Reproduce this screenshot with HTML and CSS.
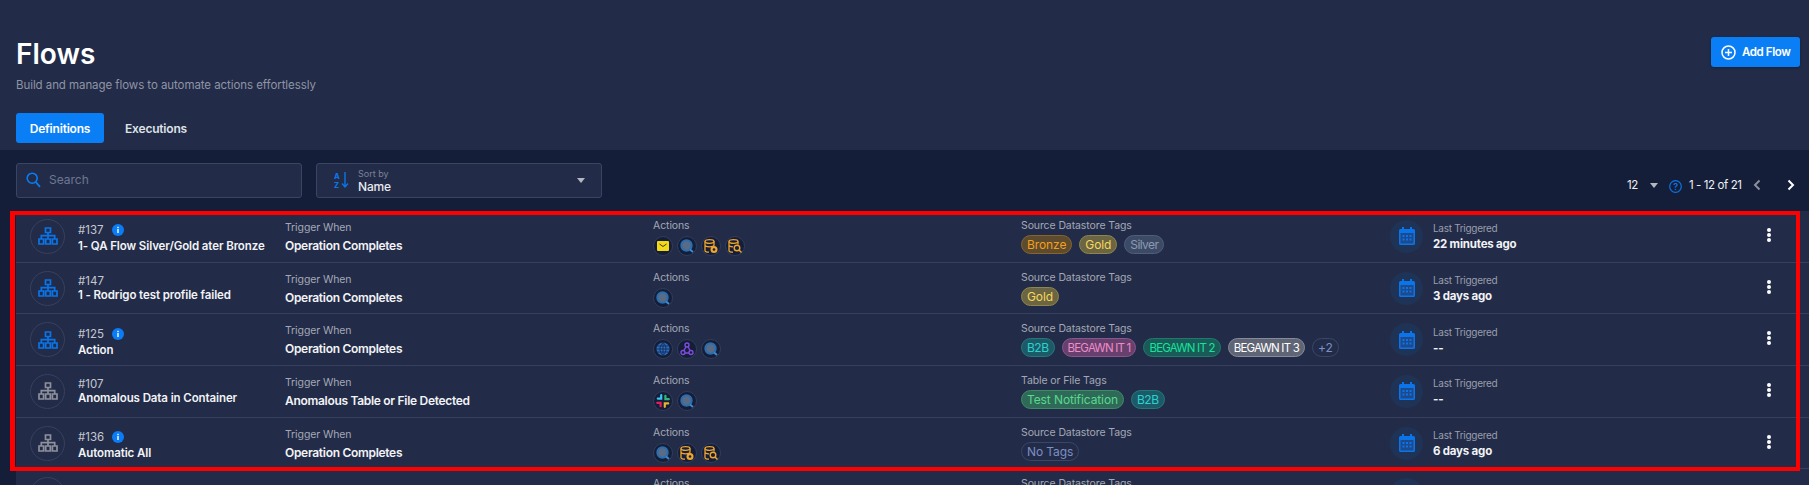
FILE: index.html
```html
<!DOCTYPE html>
<html lang="en">
<head>
    <meta charset="UTF-8">
    <title>Flows</title>
    <link rel="stylesheet" href="styles.css">
</head>
<body>
    <svg class="icon-defs" width="0" height="0">
        <symbol id="flow" viewBox="0 0 20 18">
            <path d="M7.5 1h5v4.5h-5zM1 12h4.6v5H1zM7.7 12h4.6v5H7.7zM14.4 12h4.6v5h-4.6zM10 5.5V12M3.3 12V8.7h13.4V12" fill="none" stroke="currentColor" stroke-width="1.7"/>
        </symbol>
        <symbol id="info" viewBox="0 0 12 12">
            <circle cx="6" cy="6" r="6" fill="#0a7cf5"/>
            <rect x="5.3" y="5" width="1.4" height="4" fill="#fff"/>
            <rect x="5.3" y="2.8" width="1.4" height="1.4" fill="#fff"/>
        </symbol>
        <symbol id="calendar" viewBox="0 0 16 18">
            <path d="M3 0h2v2h6V0h2v2h1.5A1.5 1.5 0 0 1 16 3.500V16.500A1.500 1.500 0 0 1 14.500 18h-13A1.500 1.500 0 0 1 0 16.500V3.500A1.500 1.500 0 0 1 1.500 2H3z" fill="#0a74e8"/>
            <rect x="1.500" y="6" width="13" height="10.500" fill="#1c4a8c"/>
            <path d="M3.500 8h2v2h-2zM7 8h2v2H7zM10.500 8h2v2h-2zM3.500 11.500h2v2h-2zM7 11.500h2v2H7zM10.500 11.500h2v2h-2z" fill="#0a74e8"/>
        </symbol>
        <symbol id="mail" viewBox="0 0 12 10">
            <rect width="12" height="10" rx="1" fill="#f2d816"/>
            <path d="M2.500 3 6 5.500 9.500 3" fill="none" stroke="#3b3a20" stroke-width="1"/>
        </symbol>
        <symbol id="scan" viewBox="0 0 14 14">
            <circle cx="6.500" cy="6.500" r="5.200" fill="#5a6b86" stroke="#2a6db0" stroke-width="2"/>
            <path d="M10 10.500 13 13" stroke="#3e8ad0" stroke-width="2" fill="none"/>
        </symbol>
        <symbol id="db-check" viewBox="0 0 14 14">
            <ellipse cx="5.500" cy="2.500" rx="4.500" ry="1.800" fill="none" stroke="#f0a52e" stroke-width="1.300"/>
            <path d="M1 2.500v9c0 1 2 1.700 4 1.700M10 2.500v4M1 6c0 1 2 1.800 4.500 1.800S10 7 10 6" fill="none" stroke="#f0a52e" stroke-width="1.300"/>
            <circle cx="10" cy="10.500" r="3.500" fill="#f0a52e"/>
            <circle cx="10" cy="10.500" r="1.300" fill="#151e38"/>
        </symbol>
        <symbol id="db-search" viewBox="0 0 14 14">
            <ellipse cx="5.500" cy="2.500" rx="4.500" ry="1.800" fill="none" stroke="#f0a52e" stroke-width="1.300"/>
            <path d="M1 2.500v9c0 1 2 1.700 4 1.700M10 2.500v3M1 6c0 1 2 1.800 4 1.800" fill="none" stroke="#f0a52e" stroke-width="1.300"/>
            <circle cx="9" cy="9" r="2.800" fill="none" stroke="#f0a52e" stroke-width="1.400"/>
            <path d="M11 11l2.500 2.500" stroke="#f0a52e" stroke-width="1.500"/>
        </symbol>
        <symbol id="globe" viewBox="0 0 14 14">
            <circle cx="7" cy="7" r="6.500" fill="#2a6ec0"/>
            <path d="M.5 7h13M1.500 4h11M1.500 10h11M7 .5v13M7 .5C3 4 3 10 7 13.500M7 .5c4 3.500 4 9.500 0 13" fill="none" stroke="#14254a" stroke-width=".8"/>
        </symbol>
        <symbol id="webhook" viewBox="0 0 14 14">
            <circle cx="7" cy="3" r="2" fill="none" stroke="#7f4be0" stroke-width="1.400"/>
            <circle cx="3" cy="10.500" r="2" fill="none" stroke="#7f4be0" stroke-width="1.400"/>
            <circle cx="11" cy="10.500" r="2" fill="none" stroke="#7f4be0" stroke-width="1.400"/>
            <path d="M6 5 3.500 9M8 5l2.500 4M5 11h4" fill="none" stroke="#7f4be0" stroke-width="1.400"/>
        </symbol>
        <symbol id="slack" viewBox="0 0 14 14">
            <path d="M5.200 1.200v3.400H1.800" fill="none" stroke="#36c5f0" stroke-width="2.200" stroke-linecap="round"/>
            <path d="M1.200 8.800h3.400v3.400" fill="none" stroke="#e01e5a" stroke-width="2.200" stroke-linecap="round"/>
            <path d="M8.800 12.800V9.400h3.400" fill="none" stroke="#ecb22e" stroke-width="2.200" stroke-linecap="round"/>
            <path d="M12.800 5.200H9.400V1.800" fill="none" stroke="#2eb67d" stroke-width="2.200" stroke-linecap="round"/>
        </symbol>
    </svg>

    <div class="page">
        <header class="page-header">
            <div class="title-row">
                <div>
                    <h1>Flows</h1>
                    <p class="subtitle">Build and manage flows to automate actions effortlessly</p>
                </div>
                <button class="add-button">
                    <svg width="15" height="15" viewBox="0 0 15 15"><circle cx="7.500" cy="7.500" r="6.500" fill="none" stroke="#fff" stroke-width="1.500"/><path d="M7.500 4v7M4 7.500h7" stroke="#fff" stroke-width="1.500"/></svg>
                    Add Flow
                </button>
            </div>
            <div class="tabs">
                <span class="tab tab-active">Definitions</span>
                <span class="tab">Executions</span>
            </div>
        </header>

        <div class="filter-bar">
            <div class="search-box">
                <svg width="15" height="16" viewBox="0 0 15 16"><circle cx="6.200" cy="6.200" r="5" fill="none" stroke="#0a7cf5" stroke-width="1.600"/><path d="M9.800 10 14 14.800" stroke="#0a7cf5" stroke-width="1.800"/></svg>
                <input type="text" placeholder="Search">
            </div>
            <div class="sort-box">
                <svg width="15" height="17" viewBox="0 0 15 17"><text x="0" y="7" class="sort-letter">A</text><text x="0" y="16" class="sort-letter">Z</text><path d="M11 0v14M8 11.500l3 3.500 3-3.500" fill="none" stroke="#0a74e8" stroke-width="1.400"/></svg>
                <div class="sort-text">
                    <span class="sort-label">Sort by</span>
                    <span class="sort-value">Name</span>
                </div>
                <span class="caret"></span>
            </div>
            <div class="pagination">
                <span class="page-size">12</span>
                <span class="caret caret-small"></span>
                <svg class="help-icon" width="13" height="13" viewBox="0 0 13 13"><circle cx="6.500" cy="6.500" r="5.800" fill="none" stroke="#0a74e8" stroke-width="1.200"/><text x="6.500" y="9.700" class="help-mark">?</text></svg>
                <span class="page-range">1 - 12 of 21</span>
                <svg class="chevron" width="8" height="12" viewBox="0 0 8 12"><path d="M6.500 1.500 2 6l4.500 4.500" fill="none" stroke="#8a8f9e" stroke-width="2"/></svg>
                <svg class="chevron chevron-next" width="8" height="12" viewBox="0 0 8 12"><path d="M1.500 1.500 6 6l-4.500 4.500" fill="none" stroke="#fff" stroke-width="2"/></svg>
            </div>
        </div>

        <div class="flow-list">
            <div class="flow-row">
                <div class="flow-name">
                    <span class="flow-icon"><svg width="20" height="18"><use href="#flow"/></svg></span>
                    <div>
                        <div class="flow-id flow-id-info">#137 <svg width="12" height="12"><use href="#info"/></svg></div>
                        <div class="flow-title">1- QA Flow Silver/Gold ater Bronze</div>
                    </div>
                </div>
                <div class="cell">
                    <div class="label">Trigger When</div>
                    <div class="value">Operation Completes</div>
                </div>
                <div class="cell-top">
                    <div class="label">Actions</div>
                    <div class="badges">
                        <span class="action"><svg width="12" height="10"><use href="#mail"/></svg></span>
                        <span class="action"><svg width="14" height="14"><use href="#scan"/></svg></span>
                        <span class="action"><svg width="14" height="14"><use href="#db-check"/></svg></span>
                        <span class="action"><svg width="14" height="14"><use href="#db-search"/></svg></span>
                    </div>
                </div>
                <div class="cell-top">
                    <div class="label">Source Datastore Tags</div>
                    <div class="badges badges-tags">
                        <span class="tag tag-bronze">Bronze</span>
                        <span class="tag tag-gold">Gold</span>
                        <span class="tag tag-silver">Silver</span>
                    </div>
                </div>
                <div class="last-run">
                    <span class="calendar"><svg width="16" height="18"><use href="#calendar"/></svg></span>
                    <div class="run-text">
                        <div class="label run-label">Last Triggered</div>
                        <div class="run-value">22 minutes ago</div>
                    </div>
                </div>
                <div class="dots"><span></span><span></span><span></span></div>
            </div>

            <div class="flow-row">
                <div class="flow-name">
                    <span class="flow-icon"><svg width="20" height="18"><use href="#flow"/></svg></span>
                    <div>
                        <div class="flow-id">#147</div>
                        <div class="flow-title">1 - Rodrigo test profile failed</div>
                    </div>
                </div>
                <div class="cell">
                    <div class="label">Trigger When</div>
                    <div class="value">Operation Completes</div>
                </div>
                <div class="cell-top">
                    <div class="label">Actions</div>
                    <div class="badges">
                        <span class="action"><svg width="14" height="14"><use href="#scan"/></svg></span>
                    </div>
                </div>
                <div class="cell-top">
                    <div class="label">Source Datastore Tags</div>
                    <div class="badges badges-tags">
                        <span class="tag tag-gold">Gold</span>
                    </div>
                </div>
                <div class="last-run">
                    <span class="calendar"><svg width="16" height="18"><use href="#calendar"/></svg></span>
                    <div class="run-text">
                        <div class="label run-label">Last Triggered</div>
                        <div class="run-value">3 days ago</div>
                    </div>
                </div>
                <div class="dots"><span></span><span></span><span></span></div>
            </div>

            <div class="flow-row">
                <div class="flow-name">
                    <span class="flow-icon"><svg width="20" height="18"><use href="#flow"/></svg></span>
                    <div>
                        <div class="flow-id flow-id-info">#125 <svg width="12" height="12"><use href="#info"/></svg></div>
                        <div class="flow-title">Action</div>
                    </div>
                </div>
                <div class="cell">
                    <div class="label">Trigger When</div>
                    <div class="value">Operation Completes</div>
                </div>
                <div class="cell-top">
                    <div class="label">Actions</div>
                    <div class="badges">
                        <span class="action"><svg width="14" height="14"><use href="#globe"/></svg></span>
                        <span class="action"><svg width="14" height="14"><use href="#webhook"/></svg></span>
                        <span class="action"><svg width="14" height="14"><use href="#scan"/></svg></span>
                    </div>
                </div>
                <div class="cell-top">
                    <div class="label">Source Datastore Tags</div>
                    <div class="badges badges-tags">
                        <span class="tag tag-teal">B2B</span>
                        <span class="tag tag-caps tag-pink">BEGAWN IT 1</span>
                        <span class="tag tag-caps tag-green">BEGAWN IT 2</span>
                        <span class="tag tag-caps tag-grey">BEGAWN IT 3</span>
                        <span class="tag tag-more">+2</span>
                    </div>
                </div>
                <div class="last-run">
                    <span class="calendar"><svg width="16" height="18"><use href="#calendar"/></svg></span>
                    <div class="run-text">
                        <div class="label run-label">Last Triggered</div>
                        <div class="run-value">--</div>
                    </div>
                </div>
                <div class="dots"><span></span><span></span><span></span></div>
            </div>

            <div class="flow-row">
                <div class="flow-name">
                    <span class="flow-icon flow-icon-off"><svg width="20" height="18"><use href="#flow"/></svg></span>
                    <div>
                        <div class="flow-id">#107</div>
                        <div class="flow-title">Anomalous Data in Container</div>
                    </div>
                </div>
                <div class="cell">
                    <div class="label">Trigger When</div>
                    <div class="value">Anomalous Table or File Detected</div>
                </div>
                <div class="cell-top">
                    <div class="label">Actions</div>
                    <div class="badges">
                        <span class="action"><svg width="14" height="14"><use href="#slack"/></svg></span>
                        <span class="action"><svg width="14" height="14"><use href="#scan"/></svg></span>
                    </div>
                </div>
                <div class="cell-top">
                    <div class="label">Table or File Tags</div>
                    <div class="badges badges-tags">
                        <span class="tag tag-mint">Test Notification</span>
                        <span class="tag tag-teal">B2B</span>
                    </div>
                </div>
                <div class="last-run">
                    <span class="calendar"><svg width="16" height="18"><use href="#calendar"/></svg></span>
                    <div class="run-text">
                        <div class="label run-label">Last Triggered</div>
                        <div class="run-value">--</div>
                    </div>
                </div>
                <div class="dots"><span></span><span></span><span></span></div>
            </div>

            <div class="flow-row">
                <div class="flow-name">
                    <span class="flow-icon flow-icon-off"><svg width="20" height="18"><use href="#flow"/></svg></span>
                    <div>
                        <div class="flow-id flow-id-info">#136 <svg width="12" height="12"><use href="#info"/></svg></div>
                        <div class="flow-title">Automatic All</div>
                    </div>
                </div>
                <div class="cell">
                    <div class="label">Trigger When</div>
                    <div class="value">Operation Completes</div>
                </div>
                <div class="cell-top">
                    <div class="label">Actions</div>
                    <div class="badges">
                        <span class="action"><svg width="14" height="14"><use href="#scan"/></svg></span>
                        <span class="action"><svg width="14" height="14"><use href="#db-check"/></svg></span>
                        <span class="action"><svg width="14" height="14"><use href="#db-search"/></svg></span>
                    </div>
                </div>
                <div class="cell-top">
                    <div class="label">Source Datastore Tags</div>
                    <div class="badges badges-tags">
                        <span class="tag tag-none">No Tags</span>
                    </div>
                </div>
                <div class="last-run">
                    <span class="calendar"><svg width="16" height="18"><use href="#calendar"/></svg></span>
                    <div class="run-text">
                        <div class="label run-label">Last Triggered</div>
                        <div class="run-value">6 days ago</div>
                    </div>
                </div>
                <div class="dots"><span></span><span></span><span></span></div>
            </div>

            <div class="flow-row">
                <div class="flow-name">
                    <span class="flow-icon"><svg width="20" height="18"><use href="#flow"/></svg></span>
                    <div>
                        <div class="flow-id flow-id-info">#154 <svg width="12" height="12"><use href="#info"/></svg></div>
                    </div>
                </div>
                <div class="cell">
                    <div class="label">Trigger When</div>
                </div>
                <div class="cell-top">
                    <div class="label">Actions</div>
                </div>
                <div class="cell-top">
                    <div class="label">Source Datastore Tags</div>
                </div>
                <div class="last-run">
                    <span class="calendar"><svg width="16" height="18"><use href="#calendar"/></svg></span>
                    <div class="run-text">
                        <div class="label run-label">Last Triggered</div>
                    </div>
                </div>
                <div class="dots"><span></span><span></span><span></span></div>
            </div>
        </div>

        <div class="highlight"></div>
    </div>
</body>
</html>
```

FILE: styles.css
```css
* {
    box-sizing: border-box;
}
html, body {
    margin: 0;
    height: 100%;
    overflow: hidden;
}
body {
    font-family: Inter, "Noto Sans", sans-serif;
    background-color: #151e38;
    color: #fff;
}
.icon-defs {
    position: absolute;
}
.page {
    position: relative;
    height: 485px;
    overflow: hidden;
}
.page-header {
    height: 150px;
    padding: 35px 9px 0 16px;
    background-color: #222c48;
}
.title-row {
    display: flex;
    justify-content: space-between;
    align-items: flex-start;
}
h1 {
    margin: 0;
    font-size: 28px;
    line-height: 38px;
    font-weight: 600;
}
.subtitle {
    margin: 4px 0 0;
    font-size: 11.500px;
    line-height: 16px;
    color: #8f94a5;
    letter-spacing: -0.07px;
}
.add-button {
    display: flex;
    align-items: center;
    gap: 6px;
    width: 89px;
    height: 30px;
    margin-top: 2px;
    padding: 0 0 0 10px;
    border: none;
    border-radius: 3px;
    background-color: #0a7ff5;
    color: #fff;
    font-family: inherit;
    font-size: 11.500px;
    font-weight: 600;
    letter-spacing: -0.4px;
    white-space: nowrap;
    box-shadow: 0 1px 3px rgba(0,0,0,0.3);
}
.tabs {
    display: flex;
    gap: 8px;
    margin-top: 20px;
}
.tab {
    display: flex;
    align-items: center;
    justify-content: center;
    height: 30px;
    width: 88px;
    border-radius: 3px;
    font-size: 12px;
    font-weight: 600;
    letter-spacing: -0.2px;
    color: #dfe1e6;
}
.tab-active {
    background-color: #0a7ff5;
    color: #fff;
}
.filter-bar {
    display: flex;
    align-items: flex-start;
    gap: 14px;
    height: 61px;
    padding: 13px 9px 0 16px;
}
.search-box, .sort-box {
    display: flex;
    align-items: center;
    height: 35px;
    border: 1px solid #3a4562;
    border-radius: 3px;
    background-color: #222c48;
}
.search-box {
    width: 286px;
    gap: 8px;
    padding: 0 0 2px 9px;
}
.search-box input {
    width: 200px;
    border: none;
    outline: none;
    padding: 0;
    background: transparent;
    color: #fff;
    font-family: inherit;
    font-size: 12px;
}
.search-box input::placeholder {
    color: #6f7790;
    opacity: 1;
}
.sort-box {
    width: 286px;
    gap: 9px;
    padding: 0 16px 0 17px;
}
.sort-letter {
    font-size: 7.500px;
    font-weight: 800;
    fill: #0a74e8;
}
.sort-text {
    flex: 1;
    display: flex;
    flex-direction: column;
}
.sort-label {
    font-size: 9px;
    line-height: 11px;
    color: #7c8296;
}
.sort-value {
    font-size: 12px;
    line-height: 15px;
    font-weight: 500;
    letter-spacing: -0.2px;
    color: #e8eaee;
}
.caret {
    width: 0;
    height: 0;
    border-left: 4px solid transparent;
    border-right: 4px solid transparent;
    border-top: 5px solid #b4b7c2;
}
.pagination {
    display: flex;
    align-items: center;
    margin-left: auto;
    height: 16px;
    margin-top: 14px;
    font-size: 11.500px;
    letter-spacing: -0.4px;
    color: #eef0f3;
}
.page-size {
    width: 23px;
}
.caret-small {
    margin-right: 11px;
}
.help-icon {
    margin-right: 7px;
    margin-top: 2px;
}
.help-mark {
    font-size: 9px;
    font-weight: 600;
    fill: #0a74e8;
    text-anchor: middle;
}
.page-range {
    width: 64px;
}
.chevron-next {
    margin-left: 26px;
    margin-right: 5px;
}
.flow-list {
    margin-left: 16px;
}
.flow-row {
    display: grid;
    grid-template-columns: 255px 368px 368px 369px 1fr 42px;
    align-items: center;
    height: 51.700px;
    padding-left: 14px;
    background-color: #222c48;
    border-bottom: 1px solid #37415f;
}
.flow-name, .last-run {
    display: flex;
    align-items: center;
}
.flow-name {
    gap: 13px;
}
.flow-icon {
    display: flex;
    align-items: center;
    justify-content: center;
    width: 35px;
    height: 35px;
    border: 1px solid #37415f;
    border-radius: 50%;
    color: #0a74e8;
}
.flow-icon-off {
    color: #8e909c;
}
.flow-id {
    font-size: 11.500px;
    line-height: 14px;
    color: #c4c7d0;
}
.flow-id-info {
    display: flex;
    align-items: center;
    gap: 8px;
    margin-top: 5px;
    margin-bottom: 2px;
}
.flow-title, .value {
    font-size: 11.500px;
    line-height: 15px;
    font-weight: 600;
    letter-spacing: -0.1px;
    color: #f2f3f6;
    white-space: nowrap;
}
.label {
    font-size: 10.500px;
    line-height: 14px;
    color: #a4a8b5;
    letter-spacing: -0.1px;
    white-space: nowrap;
}
.cell {
    padding-top: 1px;
}
.value {
    margin-top: 3px;
    font-size: 12px;
    letter-spacing: -0.3px;
}
.cell-top {
    align-self: start;
    padding-top: 8px;
}
.badges {
    display: flex;
    gap: 4px;
    margin-top: 3px;
}
.badges-tags {
    gap: 7px;
    margin-top: 2px;
}
.action {
    display: flex;
    align-items: center;
    justify-content: center;
    width: 20px;
    height: 20px;
    border: 1px solid #323d5c;
    border-radius: 50%;
    background-color: #151e38;
}
.tag {
    display: flex;
    align-items: center;
    height: 19px;
    padding: 0 5px;
    border: 1px solid;
    border-radius: 10px;
    font-size: 12px;
    letter-spacing: -0.1px;
    white-space: nowrap;
}
.tag-caps {
    font-size: 11.500px;
    letter-spacing: -0.8px;
}
.tag-bronze {
    color: #f0a020;
    background-color: #5e4a2c;
    border-color: #86662c;
}
.tag-gold {
    color: #f5d958;
    background-color: #6b6544;
    border-color: #8f8648;
}
.tag-silver {
    color: #8c9ab2;
    background-color: #3c4a66;
    border-color: #4f5e7c;
    letter-spacing: -0.6px;
}
.tag-teal {
    color: #2bd1cf;
    background-color: #1d5a68;
    border-color: #23787e;
    letter-spacing: -0.5px;
}
.tag-pink {
    color: #ee8cc8;
    background-color: #67406e;
    border-color: #8a5590;
}
.tag-green {
    color: #14e49a;
    background-color: #1a5a58;
    border-color: #1b7d68;
}
.tag-grey {
    color: #fff;
    background-color: #5f6574;
    border-color: #868b98;
}
.tag-mint {
    color: #58d98c;
    background-color: #2f6a58;
    border-color: #3f8a68;
}
.tag-more, .tag-none {
    color: #7d8fc4;
    background-color: transparent;
    border-color: #3a4668;
}
.last-run {
    gap: 10px;
}
.run-text {
    padding-top: 1px;
}
.run-label {
    font-size: 10px;
    letter-spacing: -0.3px;
    color: #9a9eac;
}
.calendar {
    display: flex;
    align-items: center;
    justify-content: center;
    width: 33px;
    height: 33px;
    border-radius: 50%;
    background-color: #1f3357;
}
.run-value {
    margin-top: 2px;
    font-size: 11.500px;
    line-height: 15px;
    font-weight: 700;
    letter-spacing: -0.2px;
    color: #f2f3f6;
}
.dots {
    display: flex;
    flex-direction: column;
    gap: 1px;
    margin-bottom: 3px;
}
.dots span {
    width: 4px;
    height: 4px;
    border-radius: 50%;
    background-color: #fff;
}
.highlight {
    position: absolute;
    left: 10px;
    top: 211px;
    width: 1790px;
    height: 260px;
    border: 4px solid #ff0000;
    border-left-width: 5px;
    pointer-events: none;
}
```
